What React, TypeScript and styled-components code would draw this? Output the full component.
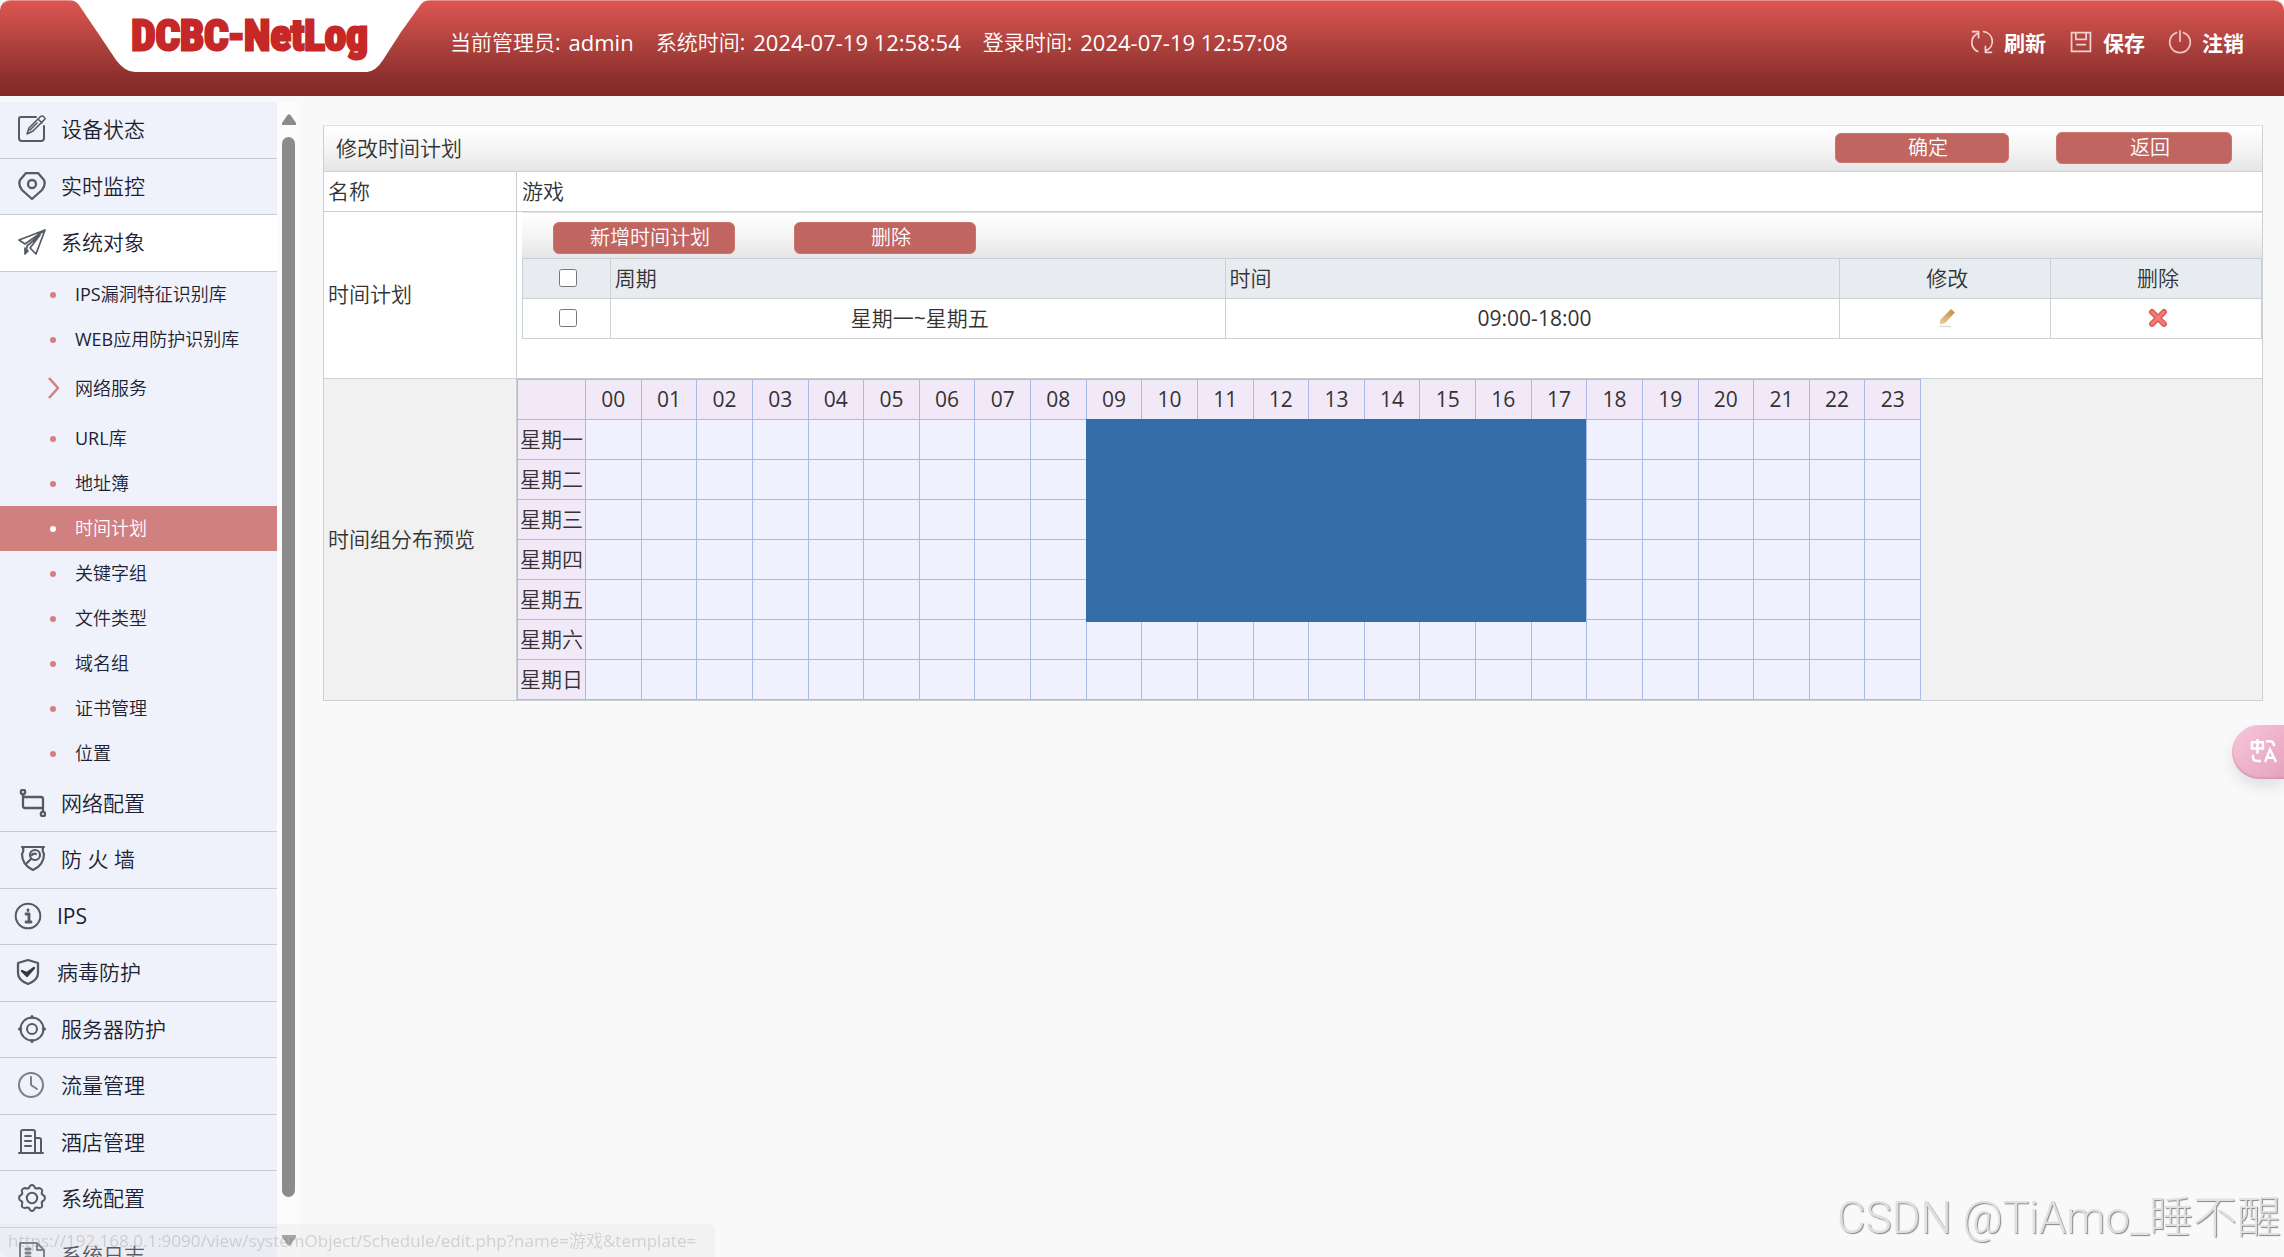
import React from 'react';
import styled, { createGlobalStyle, css } from 'styled-components';

const GlobalStyle = createGlobalStyle`
  * { box-sizing: border-box; }
  body {
    margin: 0;
    background: #f9f9f9;
    color: #333;
    font-family: "Open Sans", "Noto Sans CJK SC DemiLight", "Noto Sans CJK SC", sans-serif;
    font-size: 21px;
    line-height: 28px;
  }
  button, input { font: inherit; }
  table { border-collapse: collapse; table-layout: fixed; }
`;

const Page = styled.div`
  height: 100vh;
  display: flex;
  flex-direction: column;
  overflow: hidden;
`;

/* ---------- header ---------- */

const Header = styled.header`
  height: 96px;
  flex: none;
  display: flex;
  padding: 0 40px 0 69px;
  border-top: 1px solid #e8918c;
  border-radius: 10px 10px 0 0;
  background: linear-gradient(#dc5651, #a83f3b 52%, #8a2e2b 84%, #812a27);
  color: #fff;
`;

const LogoPlate = styled.div`
  position: relative;
  width: 361px;
  height: 72px;
  margin-top: -1px;
  flex: none;
`;

const PlateShape = styled.svg`
  display: block;
`;

const LogoText = styled.h1`
  position: absolute;
  inset: 0;
  margin: 0;
  text-align: center;
  font: 700 43px/70px "Liberation Sans Narrow", "Roboto Condensed", "Liberation Sans", sans-serif;
  color: #c62828;
  -webkit-text-stroke: 3px #c62828;
`;

const SessionInfo = styled.dl`
  display: flex;
  gap: 22px;
  margin: 27px 0 0 20px;
`;

const InfoItem = styled.div`
  display: flex;
  gap: 8px;
  white-space: nowrap;
`;

const InfoLabel = styled.dt``;

const InfoValue = styled.dd`
  margin: 0;
  font-size: 22px;
`;

const HeaderActions = styled.nav`
  display: flex;
  gap: 23px;
  margin: 27px 0 0 auto;
  height: 28px;
`;

const HeaderButton = styled.button`
  display: flex;
  align-items: center;
  gap: 10px;
  padding: 0;
  border: 0;
  background: none;
  color: #fff;
  font-family: "Noto Sans CJK SC", sans-serif;
  font-weight: 700;
  white-space: nowrap;
`;

/* ---------- sidebar ---------- */

const Body = styled.div`
  flex: 1;
  min-height: 0;
  display: flex;
`;

const Sidebar = styled.aside`
  display: flex;
  flex: none;
  margin-top: 6px;
  overflow: hidden;
`;

const Menu = styled.ul`
  width: 277px;
  margin: 0;
  padding: 0;
  list-style: none;
  background: #eff2fa;
`;

const MenuItem = styled.li`
  --row: 56px;
  &:nth-child(odd) { --row: 57px; }
`;

const MenuLink = styled.a<{ $open?: boolean; $compact?: boolean }>`
  display: flex;
  align-items: center;
  gap: 15px;
  height: var(--row);
  padding: 0 0 2px ${(p) => (p.$compact ? 14 : 18)}px;
  border-bottom: 1px solid #c5cad6;
  background: ${(p) => (p.$open ? '#fff' : 'transparent')};
  color: #1c2233;
  text-decoration: none;
  white-space: pre;
  svg { flex: none; }
`;

const SubMenu = styled.ul`
  margin: 0;
  padding: 0;
  list-style: none;
`;

const SubLink = styled.a<{ $active?: boolean; $parent?: boolean }>`
  display: flex;
  align-items: center;
  height: ${(p) => (p.$parent ? 54 : 45)}px;
  padding: 0 0 2px 46px;
  gap: 16px;
  font-size: 18px;
  color: #1c2233;
  text-decoration: none;
  ${(p) => p.$active && css`
    background: #d18080;
    color: #fff;
  `}
`;

const Marker = styled.span`
  display: flex;
  justify-content: center;
  width: 13px;
`;

const Dot = styled.i<{ $active?: boolean }>`
  width: 6px;
  height: 6px;
  margin-top: 3px;
  border-radius: 50%;
  background: ${(p) => (p.$active ? '#fff' : '#d67f7f')};
`;

const ScrollRail = styled.div`
  display: flex;
  flex-direction: column;
  align-items: center;
  width: 23px;
  padding: 12px 0 11px;
  background: #fcfcfc;
`;

const ScrollThumb = styled.div`
  width: 13px;
  flex: 1;
  margin: 12px 0 38px;
  border-radius: 7px;
  background: #8b8b8b;
`;

/* ---------- main panel ---------- */

const Main = styled.main`
  flex: 1;
  min-width: 0;
  padding: 29px 21px 0 23px;
`;

const line = '#c9d1d5';

const Panel = styled.section`
  border: 1px solid ${line};
  border-top-color: #e2e2e2;
  background: #fff;
`;

const bar = css`
  display: flex;
  align-items: center;
  background: linear-gradient(#fff, #f5f5f5 50%, #e5e5e5);
  border-bottom: 1px solid ${line};
`;

const TitleBar = styled.div`
  ${bar}
  height: 46px;
  padding: 0 30px 2px 12px;
  gap: 47px;
`;

const Title = styled.h2`
  margin: 0 auto 0 0;
  font-size: 21px;
  font-weight: 400;
`;

const RedButton = styled.button<{ $size?: 'small' | 'medium' | 'wide' }>`
  width: ${(p) => (p.$size === 'wide' ? 182 : p.$size === 'small' ? 174 : 176)}px;
  height: ${(p) => (p.$size === 'small' ? 30 : 32)}px;
  padding: 0 0 0 12px;
  border: 1px solid #cb7671;
  border-radius: 6px;
  background: #c16560;
  color: #fff;
  font-size: 20px;
  line-height: 24px;
`;

const FormRow = styled.div<{ $grey?: boolean }>`
  display: grid;
  grid-template-columns: 193px 1fr;
  background: ${(p) => (p.$grey ? '#f1f1f1' : '#fff')};
  & + & { border-top: 1px solid ${line}; }
`;

const FormLabel = styled.div`
  display: flex;
  align-items: center;
  padding: 0 0 2px 4px;
  border-right: 1px solid ${line};
`;

const TextValue = styled.div`
  padding: 5px 5px 6px;
`;

const PlanCell = styled.div`
  padding: 0 0 39px 5px;
`;

const Toolbar = styled.div`
  ${bar}
  height: 46px;
  padding: 5px 0 0 31px;
  gap: 59px;
  border-top: 1px solid #e2e2e2;
  border-bottom: 0;
`;

const PlanTable = styled.table`
  width: 100%;
  th, td {
    height: 40px;
    padding: 0 0 1px 4px;
    border: 1px solid ${line};
    font-weight: 400;
    text-align: center;
  }
  th { background: #e8ecf0; }
`;

const LeftTh = styled.th`
  && { text-align: left; }
`;

const Check = styled.input`
  display: block;
  width: 18px;
  height: 18px;
  margin: 0 auto;
`;

const IconButton = styled.button`
  display: block;
  margin: 0 auto;
  padding: 0;
  border: 0;
  background: none;
  height: 20px;
  svg { display: block; }
`;

const Preview = styled.div`
  position: relative;
  width: 1404px;
  max-width: 100%;
`;

const HourTable = styled.table`
  width: 100%;
  th, td {
    height: 40px;
    padding: 0 0 1px;
    border: 1px solid #a6bbe8;
    font-weight: 400;
    text-align: center;
    white-space: nowrap;
  }
  th { background: #f2e9f8; }
  td { background: #f0f0fe; }
`;

const DayCol = styled.col`
  width: 68px;
`;

const Busy = styled.div`
  position: absolute;
  background: #336ca6;
`;

/* ---------- overlays ---------- */

const TranslateButton = styled.button`
  position: fixed;
  right: 0;
  top: 725px;
  width: 52px;
  height: 54px;
  padding: 0 0 4px 18px;
  border: 0;
  border-radius: 27px 0 0 27px;
  background: linear-gradient(135deg, #f6c6da, #e6a3be);
  box-shadow: 0 8px 14px rgba(0, 40, 20, 0.1), inset 1px -2px 1px rgba(180, 110, 140, 0.25);
  svg { display: block; }
`;

const Watermark = styled.div`
  position: fixed;
  right: 3px;
  bottom: 13px;
  font: 300 44px/52px Roboto, "Noto Sans CJK SC", sans-serif;
  color: #e0e0e0;
  text-shadow: 1px 1px 1px #888;
`;

const StatusBar = styled.div`
  position: fixed;
  left: 0;
  bottom: 0;
  height: 33px;
  width: 715px;
  padding-left: 8px;
  border-radius: 0 6px 0 10px;
  background: rgba(225, 225, 225, 0.3);
  color: rgba(120, 120, 120, 0.27);
  font-size: 17px;
  line-height: 34px;
  white-space: nowrap;
`;

/* ---------- icons ---------- */

const Icon = ({ children, color = '#555a66', size = 28, w = 2 }: { children: React.ReactNode; color?: string; size?: number; w?: number }) => (
  <svg width={size} height={size} viewBox="0 0 28 28" fill="none" stroke={color} strokeWidth={w} strokeLinecap="round" strokeLinejoin="round" aria-hidden="true">
    {children}
  </svg>
);

const icons = {
  edit: (
    <Icon>
      <path d="M18 2H3Q1 2 1 4V23Q1 26 4 26H23Q26 26 26 23V11" />
      <path d="M9 19L11 13L22 2Q24 0 26 2T26 5L15 16Z M20 4L24 8 M12 15L19 8" strokeWidth="1.6" />
    </Icon>
  ),
  pin: (
    <Icon w={2.3}>
      <path d="M8 1H20L26 8Q28 13 24 18L14 27L4 18Q0 13 2 8Z" />
      <circle cx="14" cy="12" r="4" />
    </Icon>
  ),
  plane: (
    <Icon w={1.7}>
      <path d="M27 2L1 12L7 16L27 2L18 26L12 20L22 7L9 18V20" />
      <path d="M7 20V26L10 23Z" fill="#555a66" />
    </Icon>
  ),
  network: (
    <Icon w={2.3}>
      <circle cx="5" cy="3" r="2.2" />
      <circle cx="25" cy="25" r="2.2" />
      <path d="M5 6V17Q5 19 7 19H25 M5 8H23Q25 8 25 10V22" />
    </Icon>
  ),
  firewall: (
    <Icon w={2.2}>
      <path d="M4 2H26M5 2Q6 6 4 9Q4 20 15 25Q26 20 26 9Q24 6 25 2" />
      <circle cx="17" cy="10" r="5" />
      <path d="M13 14L9 18M14 10Q15 8 18 9" />
    </Icon>
  ),
  info: (
    <Icon>
      <circle cx="14" cy="14" r="12.3" />
      <path d="M12 12H15V20M12 20H17M14 8V8.5" strokeWidth="2.8" />
    </Icon>
  ),
  shield: (
    <Icon w={2.3}>
      <path d="M14 2L24 5V15Q24 22 14 26Q4 22 4 15V5Z" />
      <path d="M8 13L13 18L20 10L13 15Z" fill="#333844" stroke="#333844" />
    </Icon>
  ),
  target: (
    <Icon>
      <circle cx="14" cy="14" r="11.5" />
      <circle cx="14" cy="14" r="5" />
      <path d="M14 1.500V2.500M14 25.500V26.500M1.500 14H2.500M25.500 14H26.500" strokeWidth="3" />
    </Icon>
  ),
  clock: (
    <Icon color="#7b7f88">
      <circle cx="13" cy="14" r="12" />
      <path d="M13 6V14L19 18" />
    </Icon>
  ),
  hotel: (
    <Icon>
      <path d="M1 25H25M3 25V4Q3 2 5 2H15Q17 2 17 4V25M17 10H21Q23 10 23 12V25M7 8H13M7 13H13M7 18H13" />
    </Icon>
  ),
  gear: (
    <Icon>
      <path d="M11 4Q12 1 14 1T17 4Q19 5 21 4Q25 5 24 8Q23 10 25 11Q27 12 27 14T25 17Q23 18 24 20Q25 24 21 24Q19 23 17 24Q16 27 14 27T11 24Q9 23 7 24Q3 24 4 20Q5 18 3 17Q1 16 1 14T3 11Q5 10 4 8Q3 5 7 4Q9 5 11 4Z" />
      <circle cx="14" cy="14" r="5.2" />
    </Icon>
  ),
  log: (
    <Icon>
      <path d="M26 9V27H2V2H19L26 9H19V2" />
      <path d="M8 8H12M8 12H12M8 16H12" strokeWidth="3" />
    </Icon>
  ),
};

const headIcons = {
  refresh: (
    <Icon color="#f3d3d1" size={24}>
      <path d="M9 4A11.500 11.500 0 0 0 9 25M3 2H10V9M16 2A11.500 11.500 0 0 1 19 24M25 26H18V19" />
    </Icon>
  ),
  save: (
    <Icon color="#f3d3d1" size={24}>
      <path d="M3 3H25V25H3ZM8 3V11H20V3M9 17H19" strokeLinejoin="miter" />
    </Icon>
  ),
  power: (
    <Icon color="#eec8c5" size={24}>
      <path d="M10 3A12 12 0 1 0 18 3M14 1V13" />
    </Icon>
  ),
};

type Entry = { text: string; icon: React.ReactNode; compact?: boolean; children?: string[] };

const menu: Entry[] = [
  { text: '设备状态', icon: icons.edit },
  { text: '实时监控', icon: icons.pin },
  {
    text: '系统对象',
    icon: icons.plane,
    children: ['IPS漏洞特征识别库', 'WEB应用防护识别库', '网络服务', 'URL库', '地址簿', '时间计划', '关键字组', '文件类型', '域名组', '证书管理', '位置'],
  },
  { text: '网络配置', icon: icons.network },
  { text: '防 火 墙', icon: icons.firewall },
  { text: 'IPS', icon: icons.info, compact: true },
  { text: '病毒防护', icon: icons.shield, compact: true },
  { text: '服务器防护', icon: icons.target },
  { text: '流量管理', icon: icons.clock },
  { text: '酒店管理', icon: icons.hotel },
  { text: '系统配置', icon: icons.gear },
  { text: '系统日志', icon: icons.log },
];

const hours = Array.from({ length: 24 }, (_, i) => String(i).padStart(2, '0'));
const days = ['星期一', '星期二', '星期三', '星期四', '星期五', '星期六', '星期日'];
const plan = { from: 9, to: 18, firstDay: 0, lastDay: 4 };

const hourSpan = (n: number) => `calc((100% - 69px) * ${n} / 24)`;

function SideMenu() {
  return (
    <Sidebar>
      <Menu>
        {menu.map((m) => (
          <MenuItem key={m.text}>
            <MenuLink href="#" $open={!!m.children} $compact={m.compact}>
              {m.icon}
              {m.text}
            </MenuLink>
            {m.children && (
              <SubMenu>
                {m.children.map((c) => {
                  const active = c === '时间计划';
                  const parent = c === '网络服务';
                  return (
                    <li key={c}>
                      <SubLink href="#" $active={active} $parent={parent}>
                        <Marker>
                          {parent ? (
                            <svg width="13" height="22" viewBox="0 0 13 22" fill="none" stroke="#d67f7f" strokeWidth="2.5">
                              <path d="M3 1L12 11L3 21" />
                            </svg>
                          ) : (
                            <Dot $active={active} />
                          )}
                        </Marker>
                        {c}
                      </SubLink>
                    </li>
                  );
                })}
              </SubMenu>
            )}
          </MenuItem>
        ))}
      </Menu>
      <ScrollRail>
        <svg width="14" height="11"><path d="M5.500 1Q7 -0.500 8.500 1L14 9V11H0V9Z" fill="#8b8b8b" /></svg>
        <ScrollThumb />
        <svg width="14" height="11"><path d="M5.500 10Q7 11.500 8.500 10L14 2V0H0V2Z" fill="#8b8b8b" /></svg>
      </ScrollRail>
    </Sidebar>
  );
}

export default function App() {
  return (
    <Page>
      <GlobalStyle />
      <Header>
        <LogoPlate>
          <PlateShape width="361" height="72" viewBox="0 0 361 72">
            <path d="M0 0Q6 0 10 5Q20 20 31 36L47 60Q56 72 66 72H298Q307 71 314 60Q323 46 332 32L350 7Q354 0 361 0Z" fill="#fff" />
          </PlateShape>
          <LogoText>DCBC-NetLog</LogoText>
        </LogoPlate>
        <SessionInfo>
          <InfoItem><InfoLabel>当前管理员:</InfoLabel><InfoValue>admin</InfoValue></InfoItem>
          <InfoItem><InfoLabel>系统时间:</InfoLabel><InfoValue>2024-07-19 12:58:54</InfoValue></InfoItem>
          <InfoItem><InfoLabel>登录时间:</InfoLabel><InfoValue>2024-07-19 12:57:08</InfoValue></InfoItem>
        </SessionInfo>
        <HeaderActions>
          <HeaderButton>{headIcons.refresh}刷新</HeaderButton>
          <HeaderButton>{headIcons.save}保存</HeaderButton>
          <HeaderButton>{headIcons.power}注销</HeaderButton>
        </HeaderActions>
      </Header>
      <Body>
        <SideMenu />
        <Main>
          <Panel>
            <TitleBar>
              <Title>修改时间计划</Title>
              <RedButton $size="small">确定</RedButton>
              <RedButton>返回</RedButton>
            </TitleBar>
            <FormRow>
              <FormLabel>名称</FormLabel>
              <TextValue>游戏</TextValue>
            </FormRow>
            <FormRow>
              <FormLabel>时间计划</FormLabel>
              <PlanCell>
                <Toolbar>
                  <RedButton $size="wide">新增时间计划</RedButton>
                  <RedButton $size="wide">删除</RedButton>
                </Toolbar>
                <PlanTable>
                  <colgroup>
                    <col width="5%" />
                    <col width="35%" />
                    <col width="35%" />
                    <col width="12%" />
                    <col width="12%" />
                  </colgroup>
                  <thead>
                    <tr>
                      <th><Check type="checkbox" aria-label="全选" /></th>
                      <LeftTh>周期</LeftTh>
                      <LeftTh>时间</LeftTh>
                      <th>修改</th>
                      <th>删除</th>
                    </tr>
                  </thead>
                  <tbody>
                    <tr>
                      <td><Check type="checkbox" aria-label="星期一~星期五" /></td>
                      <td>星期一~星期五</td>
                      <td>09:00-18:00</td>
                      <td>
                        <IconButton aria-label="修改">
                          <svg width="20" height="20" viewBox="0 0 20 20">
                            <defs>
                              <linearGradient id="pencil" x1="1" y1="0" x2="0" y2="1">
                                <stop offset="0.2" stopColor="#c29a50" />
                                <stop offset="1" stopColor="#f0cfa0" />
                              </linearGradient>
                            </defs>
                            <path d="M3 12L14 1L18 4.500L8 15L3 16.500Z" fill="url(#pencil)" />
                            <path d="M2 18.500H14" stroke="#dcdcdc" strokeWidth="1.500" />
                          </svg>
                        </IconButton>
                      </td>
                      <td>
                        <IconButton aria-label="删除">
                          <svg width="20" height="20" viewBox="0 0 20 20">
                            <path d="M4 4L16 16M16 4L4 16" stroke="#e05a55" strokeWidth="6" strokeLinecap="round" />
                            <path d="M4 4L16 16M16 4L4 16" stroke="#ee7d78" strokeWidth="3" strokeLinecap="round" />
                          </svg>
                        </IconButton>
                      </td>
                    </tr>
                  </tbody>
                </PlanTable>
              </PlanCell>
            </FormRow>
            <FormRow $grey>
              <FormLabel>时间组分布预览</FormLabel>
              <Preview>
                <HourTable>
                  <colgroup>
                    <DayCol />
                    <col span={24} />
                  </colgroup>
                  <thead>
                    <tr>
                      <th />
                      {hours.map((h) => <th key={h}>{h}</th>)}
                    </tr>
                  </thead>
                  <tbody>
                    {days.map((d) => (
                      <tr key={d}>
                        <th>{d}</th>
                        {hours.map((h) => <td key={h} />)}
                      </tr>
                    ))}
                  </tbody>
                </HourTable>
                <Busy
                  style={{
                    left: `calc(68px + ${hourSpan(plan.from)})`,
                    width: hourSpan(plan.to - plan.from),
                    top: 40 * (plan.firstDay + 1),
                    height: 40 * (plan.lastDay - plan.firstDay + 1) + 3,
                  }}
                />
              </Preview>
            </FormRow>
          </Panel>
        </Main>
      </Body>
      <TranslateButton aria-label="翻译">
        <svg width="28" height="25" viewBox="0 0 28 24" preserveAspectRatio="none" fill="none" stroke="#fff" strokeWidth="2.400">
          <path d="M2 4H13V10H2ZM7.500 1V15M16 3H20Q24 3 24 8M3 16V18Q3 22 7 22H11M15 23L20 11L26 23M17 19H24" />
        </svg>
      </TranslateButton>
      <Watermark>CSDN @TiAmo_睡不醒</Watermark>
      <StatusBar>https://192.168.0.1:9090/view/systemObject/Schedule/edit.php?name=游戏&amp;template=</StatusBar>
    </Page>
  );
}
